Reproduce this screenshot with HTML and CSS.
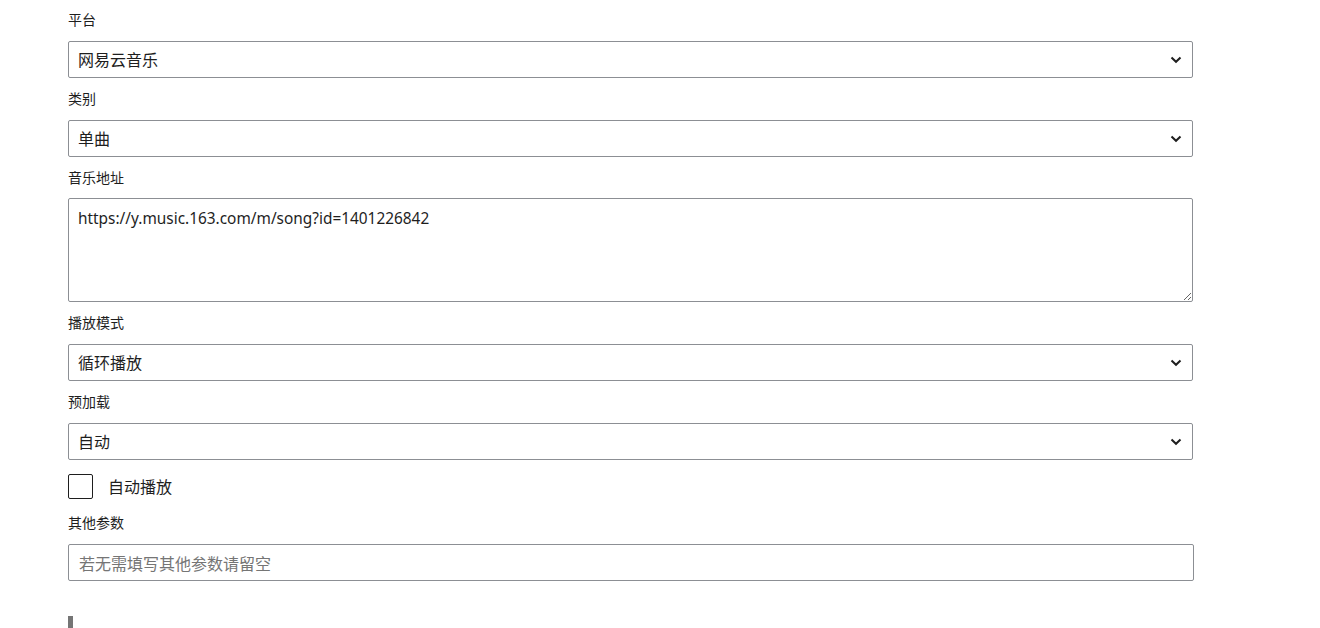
FILE: index.html
```html
<!DOCTYPE html>
<html lang="zh-CN">
<head>
<meta charset="utf-8">
<title>音乐设置</title>
<link rel="stylesheet" href="styles.css">
</head>
<body>
<div class="form">
  <div class="field">
    <label class="label">平台</label>
    <div class="select">
      <span class="select-value">网易云音乐</span>
      <svg class="chev" width="12" height="8" viewBox="0 0 12 8"><path d="M1.5 1.5 L6 5.8 L10.5 1.5" fill="none" stroke="#1e1e1e" stroke-width="2"/></svg>
    </div>
  </div>
  <div class="field">
    <label class="label">类别</label>
    <div class="select">
      <span class="select-value">单曲</span>
      <svg class="chev" width="12" height="8" viewBox="0 0 12 8"><path d="M1.5 1.5 L6 5.8 L10.5 1.5" fill="none" stroke="#1e1e1e" stroke-width="2"/></svg>
    </div>
  </div>
  <div class="field field-tight">
    <label class="label">音乐地址</label>
    <textarea class="textarea">https://y.music.163.com/m/song?id=1401226842</textarea>
  </div>
  <div class="field">
    <label class="label">播放模式</label>
    <div class="select">
      <span class="select-value">循环播放</span>
      <svg class="chev" width="12" height="8" viewBox="0 0 12 8"><path d="M1.5 1.5 L6 5.8 L10.5 1.5" fill="none" stroke="#1e1e1e" stroke-width="2"/></svg>
    </div>
  </div>
  <div class="field">
    <label class="label">预加载</label>
    <div class="select">
      <span class="select-value">自动</span>
      <svg class="chev" width="12" height="8" viewBox="0 0 12 8"><path d="M1.5 1.5 L6 5.8 L10.5 1.5" fill="none" stroke="#1e1e1e" stroke-width="2"/></svg>
    </div>
  </div>
  <div class="check-row">
    <span class="checkbox"></span>
    <span class="check-label">自动播放</span>
  </div>
  <div class="field">
    <label class="label">其他参数</label>
    <div class="input"><span class="placeholder">若无需填写其他参数请留空</span></div>
  </div>
  <div class="bar"></div>
</div>
</body>
</html>
```

FILE: styles.css
```css
html, body {
  margin: 0;
  padding: 0;
  background: #ffffff;
  overflow: hidden;
}
body {
  font-family: "Noto Sans", "Noto Sans CJK SC", sans-serif;
  color: #1e1e1e;
}
.form {
  width: 1126px;
  margin-left: 68px;
  padding-top: 10px;
  display: flex;
  flex-direction: column;
}
.field {
  display: flex;
  flex-direction: column;
  margin-bottom: 11px;
}
.label {
  font-size: 14px;
  line-height: 20px;
  height: 20px;
  margin-bottom: 11px;
}
.field-tight .label {
  margin-bottom: 10px;
}
.select {
  box-sizing: border-box;
  width: 1125px;
  height: 37px;
  border: 1px solid #8c8f94;
  border-radius: 2px;
  display: flex;
  align-items: center;
  justify-content: space-between;
  padding: 0 10px 0 9px;
}
.select-value {
  font-size: 16px;
  line-height: 20px;
  margin-top: 1px;
}
.chev {
  display: block;
  margin-top: 1px;
}
.textarea {
  box-sizing: border-box;
  width: 1125px;
  height: 104px;
  margin: 0;
  border: 1px solid #8c8f94;
  border-radius: 2px;
  padding: 10px 9px;
  font-family: "Noto Sans", "Noto Sans CJK SC", sans-serif;
  font-size: 15.4px;
  line-height: 20px;
  color: #1e1e1e;
  resize: vertical;
  outline: none;
}
.check-row {
  display: flex;
  align-items: center;
  height: 25px;
  margin-top: 3px;
  margin-bottom: 14px;
}
.checkbox {
  box-sizing: border-box;
  width: 25px;
  height: 25px;
  border: 1.5px solid #1e1e1e;
  border-radius: 2px;
}
.check-label {
  margin-left: 15px;
  font-size: 16px;
  line-height: 20px;
}
.input {
  box-sizing: border-box;
  width: 1126px;
  height: 37px;
  border: 1px solid #8c8f94;
  border-radius: 2px;
  display: flex;
  align-items: center;
  padding: 0 10px;
}
.placeholder {
  font-size: 16px;
  color: #757575;
  margin-top: 1px;
}
.bar {
  width: 5px;
  height: 20px;
  margin-top: 24px;
  background: #757575;
}
```
